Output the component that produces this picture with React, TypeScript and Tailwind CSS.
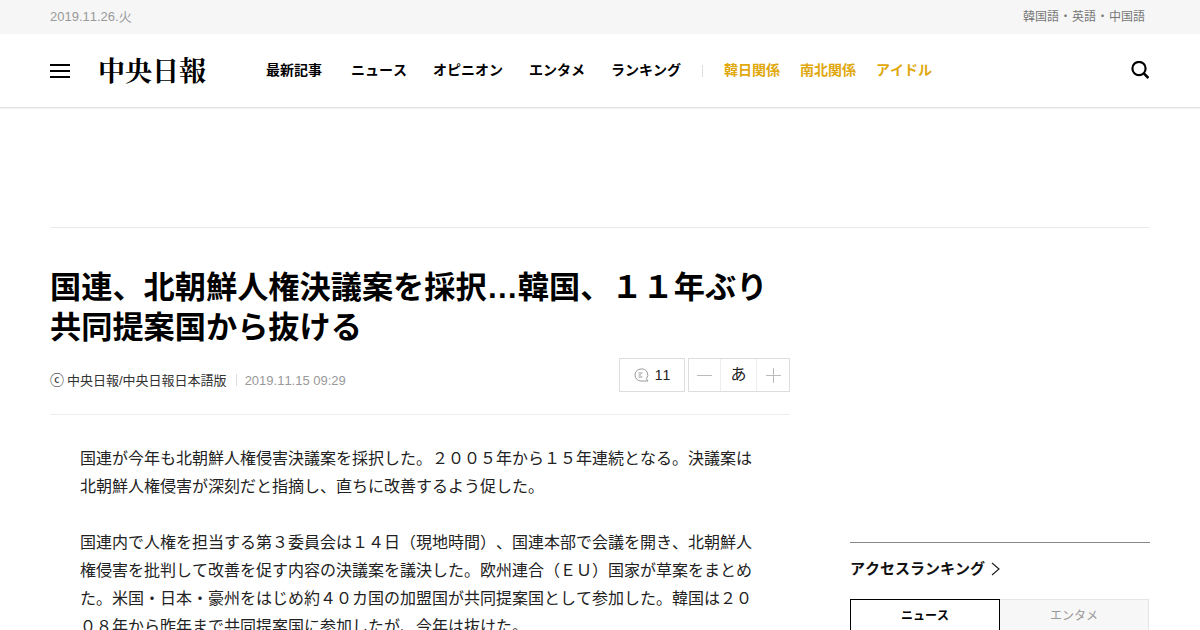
const navItems = ["ニュース", "オピニオン", "エンタメ", "ランキング"];
const hotItems = ["韓日関係", "南北関係", "アイドル"];
const font = "font-['Liberation_Sans','Noto_Sans_CJK_JP',sans-serif]";

function CommentIcon() {
  return (
    <svg width="15" height="15" viewBox="0 0 15 15" fill="none" stroke="#999" strokeWidth="1">
      <path d="M7 1a6 6 0 1 0 0 12h7l-1.6-2.2A6 6 0 0 0 7 1z" />
      <path d="M4.5 5h4M4.5 7h2.5M4.5 9h4" />
    </svg>
  );
}

function SearchIcon() {
  return (
    <svg width="18" height="18" viewBox="0 0 18 18" fill="none" stroke="black" strokeWidth="2.2" className="ml-auto mr-[1px] -mt-[2px]">
      <circle cx="8" cy="7.5" r="6.6" />
      <path d="M12.6 12.2L17.4 17" strokeWidth="2.6" />
    </svg>
  );
}

function TopBar() {
  return (
    <div className="h-[34px] bg-[#f6f6f6] px-[50px] flex items-center justify-between">
      <span className="text-[13px] text-[#999]">2019.11.26.火</span>
      <span className="flex pr-[5px] text-xs text-[#777]">
        韓国語<span className="w-[13px] text-center">・</span>英語<span className="w-[13px] text-center">・</span>中国語
      </span>
    </div>
  );
}

function Header() {
  return (
    <div className="h-[74px] border-b border-[#e2e2e2] px-[50px] flex items-center shadow-[0_1px_1px_rgba(0,0,0,0.04)]">
      <div className="w-5 flex flex-col gap-1 mr-[28px] mt-[1px]">
        <div className="h-[2px] bg-black"></div>
        <div className="h-[2px] bg-black"></div>
        <div className="h-[2px] bg-black"></div>
      </div>
      <span className="w-[168px] font-['Noto_Serif_CJK_JP','Liberation_Serif','Noto_Sans_CJK_JP',serif] text-[27px] font-bold text-black leading-none -mt-[3px]">
        中央日報
      </span>
      <nav className="flex items-center text-sm font-bold text-black gap-[26px] -mt-[2px]">
        <span className="mr-[3px]">最新記事</span>
        {navItems.map((item) => (
          <span key={item}>{item}</span>
        ))}
      </nav>
      <span className="w-px h-3 bg-[#ddd] mx-[21px]"></span>
      <div className="flex items-center text-sm font-bold text-[#e0a80d] gap-5 -mt-[2px]">
        {hotItems.map((item) => (
          <span key={item}>{item}</span>
        ))}
      </div>
      <SearchIcon />
    </div>
  );
}

function Article() {
  return (
    <div className="w-[740px]">
      <h1 className="text-[31.2px] leading-[40px] font-bold text-black">
        国連、北朝鮮人権決議案を採択…韓国、１１年ぶり
        <br />
        共同提案国から抜ける
      </h1>
      <div className="flex items-end justify-between h-[67px] pb-[22px] border-b border-[#eee]">
        <div className="flex items-center text-[13px] text-[#333] mb-[2px]">
          <span className="w-[17px] text-sm leading-[18px] text-[#222]">ⓒ</span>
          <span>中央日報/中央日報日本語版</span>
          <span className="w-px h-3 bg-[#ddd] ml-[9px] mr-2"></span>
          <span className="text-[#999]">2019.11.15 09:29</span>
        </div>
        <div className="flex items-center gap-[3px] text-sm text-[#222]">
          <div className="w-[66px] h-[34px] border border-[#ddd] flex items-center justify-center gap-[6px]">
            <CommentIcon />
            <span>11</span>
          </div>
          <div className="h-[34px] border border-[#ddd] flex items-center">
            <span className="w-8 h-full flex items-center justify-center border-r border-[#eee]">
              <svg width="15" height="15" viewBox="0 0 15 15" stroke="#bbb" strokeWidth="1">
                <path d="M0 7.5h15" />
              </svg>
            </span>
            <span className="w-9 h-full flex items-center justify-center border-r border-[#eee] text-base">あ</span>
            <span className="w-8 h-full flex items-center justify-center">
              <svg width="15" height="15" viewBox="0 0 15 15" stroke="#bbb" strokeWidth="1">
                <path d="M0 7.5h15M7.5 0v15" />
              </svg>
            </span>
          </div>
        </div>
      </div>
      <div className="px-[30px] pt-[30px] text-base leading-[28px] text-[#222]">
        <p>
          国連が今年も北朝鮮人権侵害決議案を採択した。２００５年から１５年連続となる。決議案は北朝鮮人権侵害が深刻だと指摘し、直ちに改善するよう促した。
        </p>
        <p className="mt-[28px]">
          国連内で人権を担当する第３委員会は１４日（現地時間）、国連本部で会議を開き、北朝鮮人権侵害を批判して改善を促す内容の決議案を議決した。欧州連合（ＥＵ）国家が草案をまとめた。米国・日本・豪州をはじめ約４０カ国の加盟国が共同提案国として参加した。韓国は２００８年から昨年まで共同提案国に参加したが、今年は抜けた。
        </p>
      </div>
    </div>
  );
}

function Sidebar() {
  return (
    <div className="w-[300px] pt-[274px]">
      <div className="border-t border-[#888] pt-4">
        <div className="flex items-center text-[15px] font-bold text-[#111] leading-[20px]">
          アクセスランキング
          <svg width="9" height="14" viewBox="0 0 9 14" fill="none" stroke="#222" strokeWidth="1.2" className="ml-[6px]">
            <path d="M1 1l7 6-7 6" />
          </svg>
        </div>
        <div className="flex mt-[20px] text-xs">
          <div className="w-[150px] h-[40px] border border-black border-b-0 pt-[8px] text-center font-bold text-black">ニュース</div>
          <div className="w-[149px] h-[40px] border border-[#e5e5e5] border-l-0 bg-[#f7f7f7] pt-[8px] text-center text-[#999]">エンタメ</div>
        </div>
      </div>
    </div>
  );
}

export default function App() {
  return (
    <div className={`h-[630px] overflow-hidden bg-white [text-spacing-trim:space-all] [font-kerning:none] ${font}`}>
      <TopBar />
      <Header />
      <div className="mx-[50px] h-[120px] border-b border-[#eaeaea]"></div>
      <div className="mx-[50px] pt-[40px] flex justify-between">
        <Article />
        <Sidebar />
      </div>
    </div>
  );
}
